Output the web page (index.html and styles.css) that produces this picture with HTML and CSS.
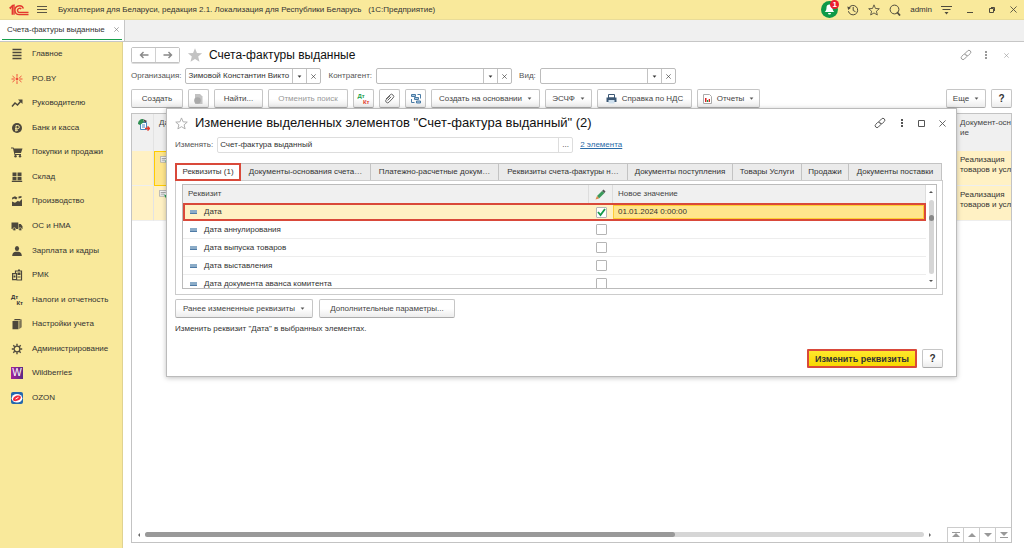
FILE: index.html
```html
<!DOCTYPE html>
<html lang="ru">
<head>
<meta charset="utf-8">
<title>Счета-фактуры выданные</title>
<link rel="stylesheet" href="styles.css">
</head>
<body>
<svg class="defs" width="0" height="0" aria-hidden="true">
  <symbol id="link" viewBox="0 0 12 12"><g fill="none" stroke="currentColor" stroke-linecap="round"><path d="M5 4.500 7.600 1.900a1.900 1.900 0 0 1 2.700 0 1.900 1.900 0 0 1 0 2.600L8.400 6.400a1.900 1.900 0 0 1-2.600 0"/><path d="M6.800 7.600 4.400 10a1.900 1.900 0 0 1-2.700 0 1.900 1.900 0 0 1 0-2.600L3.600 5.500a1.900 1.900 0 0 1 2.600 0"/></g></symbol>
  <symbol id="dots" viewBox="0 0 4 10"><path fill="currentColor" d="M1 1h2v2H1zM1 4h2v2H1zM1 7h2v2H1z"/></symbol>
  <symbol id="cross" viewBox="0 0 8 8"><path stroke="currentColor" d="m.5.5 7 7m0-7-7 7"/></symbol>
  <symbol id="down" viewBox="0 0 6 4"><path fill="currentColor" d="M.5.5h5L3 3.500z"/></symbol>
  <symbol id="star" viewBox="0 0 14 14"><path d="m7 1 1.700 4.200 4.500.3-3.400 2.900 1.100 4.400L7 10.400l-3.900 2.400 1.100-4.400L.8 5.500l4.500-.3z"/></symbol>
  <symbol id="doc" viewBox="0 0 12 12"><path fill="#f4f4f4" stroke="#aaa" d="M.5.5h9v7h-9z"/><path stroke="#999" d="M2 3h6M2 5h4"/><path fill="#17a04b" d="m6 5 6 3-3 3.500z"/></symbol>
</svg>

<header class="titlebar">
  <svg class="logo" viewBox="0 0 20 12" width="20" height="12"><g fill="none" stroke="#e3382f" stroke-width="1.400"><path d="M.5 4.200 3.300 2v8.800M2 4.600h-.8M5 10.800V1.200L2.600 1.900"/><path d="M14.400 4.500A4.400 4.400 0 1 0 10.400 10.600H19.500"/><path d="M12.200 5A2.100 2.100 0 1 0 10.600 8.500H19.500"/></g></svg>
  <button class="bare menu-btn" aria-label="Меню"><svg width="10" height="9" viewBox="0 0 10 9"><path stroke="#5b5645" d="M0 1.500h10M0 4.500h10M0 7.500h10"/></svg></button>
  <span class="app-title">Бухгалтерия для Беларуси, редакция 2.1. Локализация для Республики Беларусь &nbsp; (1С:Предприятие)</span>
  <nav class="tools">
    <button class="bare bell" aria-label="Уведомления"><svg width="17" height="17" viewBox="0 0 17 17"><circle cx="8.500" cy="8.500" r="8.500" fill="#0f9a48"/><path fill="#fff" d="M8.500 3.500a3 3 0 0 1 3 3c0 2.500.6 3.300 1.800 4.500H3.700c1.200-1.200 1.800-2 1.800-4.500a3 3 0 0 1 3-3zM7 12h3a1.500 1.500 0 0 1-3 0z"/></svg><span class="badge">1</span></button>
    <button class="bare" aria-label="История"><svg width="12" height="12" viewBox="0 0 12 12"><g fill="none" stroke="#4f4b3d"><path d="M1.800 4A4.700 4.700 0 1 1 1.400 7.200"/><path d="M6.200 3v3.500l2.300 1.200"/></g><path fill="#4f4b3d" d="M.3 2.500 1.200 6 4 3.800z"/></svg></button>
    <button class="bare" aria-label="Избранное"><svg width="12" height="12" fill="none" stroke="#4f4b3d"><use href="#star"/></svg></button>
    <button class="bare" aria-label="Поиск"><svg width="12" height="12" viewBox="0 0 12 12"><circle cx="5.500" cy="5.500" r="4.400" fill="none" stroke="#4f4b3d"/><path stroke="#4f4b3d" stroke-width="1.800" d="m8 8 3 3.500"/></svg></button>
    <span class="user">admin</span>
    <button class="bare" aria-label="Настройка"><svg width="11" height="11" viewBox="0 0 11 11"><path stroke="#4f4b3d" d="M0 2.500h11M1.500 5.500h8"/><path fill="#4f4b3d" d="M3.500 8h4l-2 2.500z"/></svg></button>
    <button class="bare win" aria-label="Свернуть"><svg width="8" height="8"><path stroke="#4f4b3d" d="M1 6.500h6"/></svg></button>
    <button class="bare win" aria-label="Развернуть"><svg width="8" height="8"><path fill="none" stroke="#4f4b3d" d="M1.500 2.500h4v4h-4zM3 1.500h3.500V5"/></svg></button>
    <button class="bare win" aria-label="Закрыть"><svg width="7" height="7" color="#4f4b3d"><use href="#cross"/></svg></button>
  </nav>
</header>

<div class="tabbar">
  <div class="page-tab"><div class="page-tab-in"><span>Счета-фактуры выданные</span><button class="bare" aria-label="Закрыть вкладку"><svg width="5" height="5" color="#777"><use href="#cross"/></svg></button></div></div>
</div>

<div class="body">
  <nav class="sidebar">
    <ul>
      <li><a href="#"><svg viewBox="0 0 12 12"><path stroke="#4d483c" stroke-width="1.500" d="M1.500 1.500h9M1.500 4.500h9M1.500 7.500h9M1.500 10.500h9"/></svg>Главное</a></li>
      <li><a href="#"><svg viewBox="0 0 12 12"><path stroke="#f0503c" d="M6 3.800V1M6 8.200V11M3.800 5 1.500 3M8.200 5l2.300-2M3.800 7 1.500 9M8.200 7l2.300 2M3.500 6H.5M8.500 6h3"/><circle cx="6" cy="6" r="1.400" fill="#f0503c"/></svg>PO.BY</a></li>
      <li><a href="#"><svg viewBox="0 0 12 12"><path fill="none" stroke="#4d483c" stroke-width="1.500" d="m1 9.500 3-3.500 2.500 2L10 4"/><path fill="#4d483c" d="M7 2.500h4.500V7z"/></svg>Руководителю</a></li>
      <li><a href="#"><svg viewBox="0 0 12 12"><circle cx="6" cy="6" r="5" fill="#4d483c"/><path fill="none" stroke="#f9e99b" d="M5 9.500v-6h1.700a1.600 1.600 0 0 1 0 3.200H4M4 8.200h3"/></svg>Банк и касса</a></li>
      <li><a href="#"><svg viewBox="0 0 12 12"><path fill="#4d483c" d="M0 1.500h2.500l.5 1h8.500L10 7H4l.3 1H10v1H3.500L2 2.500H0z"/><circle cx="4.500" cy="10.300" r="1.200" fill="#4d483c"/><circle cx="9" cy="10.300" r="1.200" fill="#4d483c"/></svg>Покупки и продажи</a></li>
      <li><a href="#"><svg viewBox="0 0 12 12"><path fill="#4d483c" d="M1.500 1.500h4v3.800h-4zM6.500 1.500h4v3.800h-4zM1.500 6h4v3.200h-4zM6.500 6h4v3.200h-4zM.8 9.800h10.400V11H.8z"/></svg>Склад</a></li>
      <li><a href="#"><svg viewBox="0 0 12 12"><path fill="#4d483c" d="M1 11V6.500l3 1.300 3-2 1.200 1L11 4v7zM1.200 2.500 4 1.200l2.500 1.600-1.300 1.600-2-.9L1 4.500zM7.500 1.500 10.500 1v1.800l-3 .8z"/></svg>Производство</a></li>
      <li><a href="#"><svg viewBox="0 0 12 12"><path fill="#4d483c" d="M.5 2.500h6.800V9H.5zM7.800 4h2l1.700 2.200V9H7.800z"/><g fill="#4d483c" stroke="#f9e99b" stroke-width=".6"><circle cx="3.300" cy="9.200" r="1.500"/><circle cx="9.200" cy="9.200" r="1.500"/></g></svg>ОС и НМА</a></li>
      <li><a href="#"><svg viewBox="0 0 12 12"><ellipse cx="6" cy="3.500" rx="2.100" ry="2.600" fill="#4d483c"/><path fill="#4d483c" d="M1.200 11c0-3 1.800-4 3.500-4.200h2.600C9 7 10.800 8 10.800 11z"/></svg>Зарплата и кадры</a></li>
      <li><a href="#"><svg viewBox="0 0 12 12"><path fill="none" stroke="#4d483c" stroke-width="1.200" d="M1.600 4.600h4v6h-4zM4.500 4.500V2h6v9H5.500"/><path fill="#4d483c" d="M6.500 3.500h3V6h-3zM6.500 7.500h3v1h-3zM2.500 6.500h2v2h-2zM7 .5h2V2H7z"/></svg>РМК</a></li>
      <li><a href="#"><span class="dtkt side-dtkt"><span>Дт</span><span>Кт</span></span>Налоги и отчетность</a></li>
      <li><a href="#"><svg viewBox="0 0 12 12"><path fill="#4d483c" d="M1.500 3h6v8.200h-6zM2.500 2.300 4 1h6.500L8.500 2.300z"/><path fill="#7b7355" d="M8.200 3 10.700 1.300v8L8.200 11z"/></svg>Настройки учета</a></li>
      <li><a href="#"><svg viewBox="0 0 12 12"><circle cx="6" cy="6" r="2.900" fill="none" stroke="#4d483c" stroke-width="1.300"/><path stroke="#4d483c" stroke-width="1.400" d="M6 .8v2M6 9.200v2M.8 6h2M9.200 6h2M2.300 2.300l1.400 1.400M8.300 8.300l1.400 1.400M2.300 9.700l1.400-1.400M8.300 3.700l1.400-1.400"/></svg>Администрирование</a></li>
      <li><a href="#"><span class="wb">W</span>Wildberries</a></li>
      <li><a href="#"><svg viewBox="0 0 12 12"><rect width="12" height="12" rx="2" fill="#2467ad"/><ellipse cx="6" cy="6.200" rx="5.300" ry="4.300" fill="#fff"/><path fill="#f0293c" d="M2 7.500C2 5 5 3 8 3.500c2.500.5 2.500 3 0 4.500-2.500 1.500-6 1.800-6-.5z"/><path stroke="#fff" d="m4.500 7 3-1.700"/></svg>OZON</a></li>
    </ul>
  </nav>

  <main class="main">
    <div class="page-head">
      <div class="nav-pair">
        <button aria-label="Назад"><svg width="10" height="8" viewBox="0 0 10 8"><path fill="none" stroke="#888" stroke-width="1.400" d="M9.500 4h-8M4.500 1l-3 3 3 3"/></svg></button><button aria-label="Вперед"><svg width="10" height="8" viewBox="0 0 10 8"><path fill="none" stroke="#888" stroke-width="1.400" d="M.5 4h8M5.500 1l3 3-3 3"/></svg></button>
      </div>
      <svg class="fav" width="16" height="16" fill="#c3c3c3"><use href="#star"/></svg>
      <h1>Счета-фактуры выданные</h1>
      <div class="head-icons">
        <button class="bare" aria-label="Ссылка"><svg width="12" height="12"><use href="#link"/></svg></button>
        <button class="bare" aria-label="Еще"><svg width="4" height="10"><use href="#dots"/></svg></button>
        <button class="bare" aria-label="Закрыть"><svg width="5" height="5"><use href="#cross"/></svg></button>
      </div>
    </div>

    <div class="filters">
      <label for="org">Организация:</label>
      <div class="combo"><input id="org" value="Зимовой Константин Викто"><button aria-label="Выбрать"><svg width="5" height="3"><use href="#down"/></svg></button><button aria-label="Очистить"><svg width="5" height="5"><use href="#cross"/></svg></button></div>
      <label for="agent">Контрагент:</label>
      <div class="combo"><input id="agent"><button aria-label="Выбрать"><svg width="5" height="3"><use href="#down"/></svg></button><button aria-label="Очистить"><svg width="5" height="5"><use href="#cross"/></svg></button></div>
      <label for="kind">Вид:</label>
      <div class="combo"><input id="kind"><button aria-label="Выбрать"><svg width="5" height="3"><use href="#down"/></svg></button><button aria-label="Очистить"><svg width="5" height="5"><use href="#cross"/></svg></button></div>
    </div>

    <div class="toolbar">
      <button class="btn w52">Создать</button>
      <button class="btn icon" aria-label="Скопировать"><svg width="11" height="12" viewBox="0 0 11 12"><path fill="#c2c2c2" d="M2 1h5l2.500 2.500V11H2z"/><circle cx="4.500" cy="7.500" r="3.300" fill="#a9a9a9"/></svg></button>
      <button class="btn w48">Найти...</button>
      <button class="btn w80" disabled>Отменить поиск</button>
      <button class="btn icon" aria-label="Дт Кт"><span class="dtkt"><span class="green">Дт</span><span class="red">Кт</span></span></button>
      <button class="btn icon" aria-label="Файлы"><svg width="11" height="11" viewBox="0 0 11 11"><path fill="none" stroke="#666" d="M3.500 7.500 7.200 3.800M2 6 6 2a2 2 0 0 1 3 0 2 2 0 0 1 0 3L5 9.200a2 2 0 0 1-2.800 0 2 2 0 0 1 0-2.700L6 2.900"/></svg></button>
      <button class="btn icon" aria-label="Структура"><svg width="12" height="11" viewBox="0 0 12 11"><g fill="#a9c6de" stroke="#4a7ba5"><path d="M1.500 1.500h4v2h-4zM4.500 4.500h4v2h-4zM6.500 8h4v2h-4z"/><path fill="none" d="M7.500 1.500h3v4M1.500 6v3.500h3"/></g></svg></button>
      <button class="btn w110">Создать на основании <svg class="caret" width="5" height="3"><use href="#down"/></svg></button>
      <button class="btn w46">ЭСЧФ <svg class="caret" width="5" height="3"><use href="#down"/></svg></button>
      <button class="btn w94"><svg width="11" height="10" viewBox="0 0 11 10"><path fill="#fff" stroke="#3c5875" d="M2.500.5h6V4h-6z"/><path fill="#3c5875" d="M.5 3.500h10V8H.5z"/><path fill="#cfe0ee" d="M2.500 6h6v3.500h-6z"/></svg>Справка по НДС</button>
      <button class="btn w62"><svg width="9" height="10" viewBox="0 0 9 10"><path fill="#fff" stroke="#aaa" d="M.5.5h6l2 2v7h-8z"/><path fill="#d22" d="M2 4h1.500v4H2z"/><path fill="#17a04b" d="M4 6h1.200v2H4z"/><path fill="#d22" d="M5.700 5H7v3H5.700z"/></svg>Отчеты <svg class="caret" width="5" height="3"><use href="#down"/></svg></button>
      <button class="btn w40 push">Еще <svg class="caret" width="5" height="3"><use href="#down"/></svg></button>
      <button class="btn icon help">?</button>
    </div>

    <section class="list">
      <table class="grid">
        <colgroup><col class="c-flag"><col><col class="c-base"></colgroup>
        <thead><tr>
          <th><svg width="13" height="13" viewBox="0 0 13 13"><path fill="#fff" stroke="#4a86c0" d="M3.500 4.500h6v7h-6z"/><path stroke="#4a86c0" d="M5 7h3M5 9h3"/><path fill="#2f8f52" d="M1 6c0-3 2-5 5-5l1 3-4 3z"/><path fill="#444" d="m6 1 4 2-2 2z"/><path fill="none" stroke="#e23b2e" stroke-width="1.500" d="M8 10.500h4M10.500 8.500l2 2-2 2"/></svg></th>
          <th>Дата</th><th>Документ-осн<br>ие</th></tr></thead>
        <tbody>
          <tr><td></td><td class="current"><svg width="10" height="10"><use href="#doc"/></svg></td><td>Реализация<br>товаров и усл</td></tr>
          <tr><td></td><td><svg width="10" height="10"><use href="#doc"/></svg></td><td>Реализация<br>товаров и усл</td></tr>
        </tbody>
      </table>
      <div class="list-foot">
        <span class="arrow left"></span>
        <div class="hscroll"><div class="thumb"></div></div>
        <span class="arrow right"></span>
        <div class="pager">
          <button aria-label="В начало"><svg width="8" height="6"><path fill="#999" d="M0 0h8v1H0zM4 1l4 4H0z"/></svg></button>
          <button aria-label="Вверх"><svg width="8" height="6"><path fill="#999" d="m4 1 4 4H0z"/></svg></button>
          <button aria-label="Вниз"><svg width="8" height="6"><path fill="#999" d="M0 1h8L4 5z"/></svg></button>
          <button aria-label="В конец"><svg width="8" height="6"><path fill="#999" d="M0 0h8L4 4zM0 5h8v1H0z"/></svg></button>
        </div>
      </div>
    </section>

    <section class="dialog" role="dialog" aria-labelledby="dlg-title">
      <div class="dlg-head">
        <svg width="13" height="13" viewBox="0 0 14 14" fill="none" stroke="#aaa"><use href="#star"/></svg>
        <h2 id="dlg-title">Изменение выделенных элементов "Счет-фактура выданный" (2)</h2>
        <div class="dlg-icons">
          <button class="bare" aria-label="Ссылка"><svg width="12" height="12"><use href="#link"/></svg></button>
          <button class="bare" aria-label="Меню"><svg width="4" height="10"><use href="#dots"/></svg></button>
          <button class="bare" aria-label="Развернуть"><svg width="7" height="7"><path fill="none" stroke="currentColor" d="M.5.5h6v6h-6z"/></svg></button>
          <button class="bare" aria-label="Закрыть"><svg width="7" height="7"><use href="#cross"/></svg></button>
        </div>
      </div>
      <div class="dlg-field">
        <label for="what">Изменять:</label>
        <div class="combo soft"><input id="what" value="Счет-фактура выданный"><button aria-label="Выбрать">...</button></div>
        <a href="#">2 элемента</a>
      </div>
      <div class="tabs" role="tablist">
        <button role="tab" class="active" aria-selected="true">Реквизиты (1)</button>
        <button role="tab" class="w130">Документы-основания счета…</button>
        <button role="tab" class="w128">Платежно-расчетные докум…</button>
        <button role="tab" class="w129">Реквизиты счета-фактуры н…</button>
        <button role="tab" class="w105">Документы поступления</button>
        <button role="tab" class="w69">Товары Услуги</button>
        <button role="tab" class="w47">Продажи</button>
        <button role="tab" class="w93">Документы поставки</button>
      </div>
      <div class="panel">
        <div class="props">
          <div class="props-view">
          <table>
            <colgroup><col><col class="c-tick"><col class="c-value"></colgroup>
            <thead><tr><th>Реквизит</th><th><svg width="11" height="11" viewBox="0 0 11 11"><path fill="#3a9a5b" d="m2 7 5-5 2.500 2L4 9.500z"/><path fill="#e08a4a" d="m2 7 2 2.500-3.500 1z"/><path fill="#555" d="m7 2 1.500-1.500 2 2L9.500 4z"/></svg></th><th>Новое значение</th></tr></thead>
            <tbody>
              <tr class="sel"><td><label for="p1">Дата</label></td><td><input type="checkbox" id="p1" checked></td><td>01.01.2024 0:00:00</td></tr>
              <tr><td><label for="p2">Дата аннулирования</label></td><td><input type="checkbox" id="p2"></td><td></td></tr>
              <tr><td><label for="p3">Дата выпуска товаров</label></td><td><input type="checkbox" id="p3"></td><td></td></tr>
              <tr><td><label for="p4">Дата выставления</label></td><td><input type="checkbox" id="p4"></td><td></td></tr>
              <tr><td><label for="p5">Дата документа аванса комитента</label></td><td><input type="checkbox" id="p5"></td><td></td></tr>
            </tbody>
          </table>
          </div>
          <div class="vscroll"><span class="arrow up"></span><div class="track"><span class="knob"></span></div><span class="arrow dn"></span></div>
        </div>
      </div>
      <div class="dlg-actions">
        <button class="btn w138">Ранее измененные реквизиты <svg class="caret" width="5" height="3"><use href="#down"/></svg></button>
        <button class="btn w136">Дополнительные параметры...</button>
      </div>
      <p class="hint">Изменить реквизит "Дата" в выбранных элементах.</p>
      <div class="dlg-foot">
        <button class="primary">Изменить реквизиты</button>
        <button class="btn icon help">?</button>
      </div>
    </section>
  </main>
</div>
</body>
</html>
```

FILE: styles.css
```css
* { box-sizing: border-box; }
html, body { height: 100%; margin: 0; }
body {
  display: flex;
  flex-direction: column;
  overflow: hidden;
  background: #fff;
  color: #333;
  font: 8px/10px "Liberation Sans", Arial, sans-serif;
}
button, input { font: inherit; color: inherit; }
button { padding: 0; }
svg { display: block; flex: none; }
.defs { position: absolute; }
.bare { display: flex; align-items: center; justify-content: center; border: 0; background: none; color: inherit; }

.titlebar { display: flex; align-items: center; flex: none; height: 20px; padding: 0 7px 0 9px; background: #f9e99b; border-bottom: 1px solid #e9dc98; }
.menu-btn { margin-left: 8px; }
.app-title { margin-left: 11px; white-space: nowrap; }
.tools { display: flex; align-items: center; gap: 9px; margin-left: auto; }
.bell { position: relative; }
.badge { position: absolute; top: -1px; right: -1px; width: 9px; height: 9px; border-radius: 50%; background: #ec1c2e; color: #fff; font-size: 8px; line-height: 9px; font-weight: bold; }
.win { margin-left: 5px; }

.tabbar { display: flex; flex: none; height: 22px; background: #f0f0f0; border-bottom: 1px solid #c6c6c6; }
.page-tab { width: 125px; padding: 0 2px 1px; background: #fff; border-right: 1px solid #c6c6c6; }
.page-tab-in { display: flex; align-items: center; justify-content: space-between; height: 20px; padding: 0 3px 0 5px; border-bottom: 1px solid #17a04b; white-space: nowrap; }

.body { display: flex; flex: 1; min-height: 0; }
.sidebar { flex: none; width: 123px; background: #f9e99b; border-right: 1px solid #e0d391; }
.sidebar ul { display: grid; grid-auto-rows: 1fr; height: 368px; margin: 0; padding: 0; list-style: none; }
.sidebar li { display: grid; }
.sidebar a { display: flex; align-items: center; gap: 9px; padding-left: 11px; color: #333; text-decoration: none; white-space: nowrap; }
.sidebar svg { width: 12px; height: 12px; }
.dtkt { display: grid; width: 12px; font-size: 6px; line-height: 6px; font-weight: bold; text-align: left; }
.dtkt span:last-child { text-align: right; }
.green { color: #17a04b; }
.red { color: #e23b2e; }
.wb { width: 12px; background: linear-gradient(90deg, #a3239b, #5b2a86); color: #fff; font-size: 10px; line-height: 12px; text-align: center; }

.main { position: relative; display: flex; flex-direction: column; flex: 1; min-width: 0; padding: 5px 12px 5px 8px; }
.page-head { display: flex; align-items: center; height: 16px; }
.nav-pair { display: flex; width: 49px; height: 16px; border: 1px solid #c3c3c3; border-radius: 2px; box-shadow: 0 1px #ddd; }
.nav-pair button { display: flex; flex: 1; align-items: center; justify-content: center; border: 0; background: #fff; }
.nav-pair button + button { border-left: 1px solid #d0d0d0; }
.fav { margin-left: 7px; }
h1, h2 { margin: 0; color: #111; font-size: 13px; line-height: 16px; font-weight: normal; white-space: nowrap; }
h1 { margin-left: 6px; font-size: 12px; }
.head-icons { display: flex; align-items: center; gap: 12px; margin: 0 3px 0 auto; color: #999; }
.head-icons .bare:last-child { margin-left: 4px; }

.filters { display: flex; align-items: center; margin-top: 5px; height: 16px; color: #555; }
.filters label + .combo { margin-left: 4px; }
.combo + label { margin-left: 7px; }
.combo { display: flex; width: 136px; height: 16px; border: 1px solid #bcbcbc; border-radius: 2px; background: #fff; color: #333; }
.combo input { flex: 1; min-width: 0; padding: 0 2px; border: 0; outline: 0; background: none; }
.combo button { display: flex; align-items: center; justify-content: center; width: 14px; border: 0; border-left: 1px solid #c3c3c3; background: none; }

.toolbar { display: flex; gap: 5px; margin-top: 5px; height: 19px; }
.btn { display: flex; align-items: center; justify-content: center; gap: 5px; height: 19px; border: 1px solid #c6c6c6; border-bottom-color: #aaa; border-radius: 2px; background: linear-gradient(#fff 50%, #ececec); color: #444; white-space: nowrap; }
.btn:disabled { color: #999; }
.icon { width: 21px; }
.help { color: #333; font-size: 10px; font-weight: bold; }
.caret { color: #555; }
.push { margin-left: auto; }
.w40 { width: 40px; } .w46 { width: 47px; } .w48 { width: 49px; } .w52 { width: 52px; }
.w62 { width: 63px; } .w80 { width: 80px; } .w94 { width: 95px; } .w110 { width: 109px; }
.w136 { width: 136px; } .w138 { width: 138px; }

.list { display: flex; flex: 1; flex-direction: column; min-height: 0; margin-top: 5px; border: 1px solid #c3c3c3; overflow: hidden; }
table { width: 100%; table-layout: fixed; border-collapse: separate; border-spacing: 0; }
th, td { padding: 0; text-align: left; font-weight: normal; vertical-align: top; }
.grid th, .grid td { overflow: hidden; padding: 4px 0 0 3px; white-space: nowrap; border-right: 1px solid #e3e3e3; }
.grid th { height: 37px; padding: 4px 0 0 5px; background: #f0f0f0; color: #444; }
.grid td { height: 35px; background: #fff1c4; border-bottom: 1px solid #eee; }
.grid th:last-child, .grid td:last-child { padding-left: 5px; border-right: 0; }
.grid td.current { background: #ffe68c; border: 1px solid #fc0; }
.grid td:nth-child(2) { padding-left: 5px; }
.c-flag { width: 22px; }
.c-base { width: 56px; }
.list-foot { display: flex; align-items: center; height: 15px; margin-top: auto; padding-left: 6px; }
.hscroll { flex: 1; height: 5px; margin: 0 5px; border-radius: 3px; background: #d6d6d6; }
.thumb { width: 68%; height: 5px; border-radius: 3px; background: #999; }
.arrow { border: 2px solid transparent; }
.left { border-right-color: #666; border-left: 0; }
.right { border-left-color: #666; border-right: 0; margin-right: 16px; }
.up { border-bottom-color: #555; border-top: 0; }
.dn { border-top-color: #555; border-bottom: 0; }
.pager { display: flex; align-self: stretch; border-top: 1px solid #ccc; }
.pager button { display: flex; align-items: center; justify-content: center; width: 16px; border: 0; border-left: 1px solid #ccc; background: #fff; }

.dialog { position: absolute; top: 66px; left: 43px; right: 67px; padding: 6px 13px 8px 8px; border: 1px solid #bbb; background: #fff; box-shadow: 0 1px 5px rgba(0, 0, 0, .25); }
.dlg-head { display: flex; align-items: center; gap: 7px; height: 16px; }
.dlg-icons { display: flex; align-items: center; gap: 14px; margin-right: -3px; margin-left: auto; color: #555; }
.dlg-field { display: flex; align-items: center; height: 15px; margin-top: 6px; color: #555; }
.dlg-field .combo { width: 356px; margin: 0 7px 0 4px; }
.soft, .soft button { border-color: #ddd; }
.dlg-field a { color: #2a6ca8; }
.tabs { display: flex; height: 17px; margin-top: 11px; }
.tabs button { overflow: hidden; border: 1px solid #c3c3c3; border-width: 1px 1px 0 0; background: #ebebeb; white-space: nowrap; }
.tabs .active { z-index: 1; width: 66px; height: 18px; border: 2px solid #d9493a; background: #fff; }
.w47 { width: 47px; } .w69 { width: 69px; } .w93 { width: 93px; } .w105 { width: 105px; }
.w128 { width: 128px; } .w129 { width: 129px; } .w130 { width: 130px; }
.panel { padding: 3px 5px 5px 6px; border: 1px solid #ccc; }
.props { display: flex; height: 105px; border: 1px solid #bbb; }
.props-view { flex: 1; overflow: hidden; }
.props th { height: 18px; padding: 0 5px; background: #f0f0f0; border-right: 1px solid #ddd; color: #444; vertical-align: middle; }
.props td { height: 18px; padding: 0 5px; border-bottom: 1px solid #ededed; vertical-align: middle; }
.props td:first-child { padding-left: 7px; }
.props label { display: flex; align-items: center; gap: 7px; }
.props label::before { content: ""; width: 7px; height: 3px; background: #8bacc8; border-bottom: 1px solid #4f7ba6; }
.props th:nth-child(2) svg { margin: auto; }
.c-tick { width: 24px; }
.c-value { width: 313px; }
.props input { display: block; width: 11px; height: 11px; margin: 0 auto; appearance: none; border: 1px solid #b5b5b5; border-radius: 1px; background: #fff; }
.props input:checked { background: #fff url("data:image/svg+xml,%3Csvg xmlns='http://www.w3.org/2000/svg' viewBox='0 0 9 9'%3E%3Cpath fill='none' stroke='%23139a48' stroke-width='1.800' d='m1 4 2.500 3L8 1'/%3E%3C/svg%3E"); }
.props .sel td { background: #fff1c4; border: solid #d9493a; border-width: 2px 0; }
.props .sel td:first-child { border-left-width: 2px; padding-left: 5px; }
.props .sel td:last-child { border-right-width: 2px; background: #ffe68c; box-shadow: inset 0 0 0 1px #fc3; }
.vscroll { display: flex; flex-direction: column; align-items: center; justify-content: space-between; width: 10px; padding: 6px 0; }
.track { display: flex; align-items: center; justify-content: center; width: 5px; height: 74px; padding-bottom: 37px; border-radius: 3px; background: #d6d6d6; }
.knob { width: 5px; height: 6px; border-radius: 3px; background: #888; }
.dlg-actions { display: flex; gap: 6px; margin-top: 4px; }
.hint { margin: 6px 0 0; }
.dlg-foot { display: flex; justify-content: flex-end; gap: 5px; margin-top: 15px; }
.primary { width: 110px; height: 19px; border: 2px solid #d9493a; border-radius: 1px; background: linear-gradient(#ffe82c, #f8d800); font-size: 9px; font-weight: bold; white-space: nowrap; }
```
